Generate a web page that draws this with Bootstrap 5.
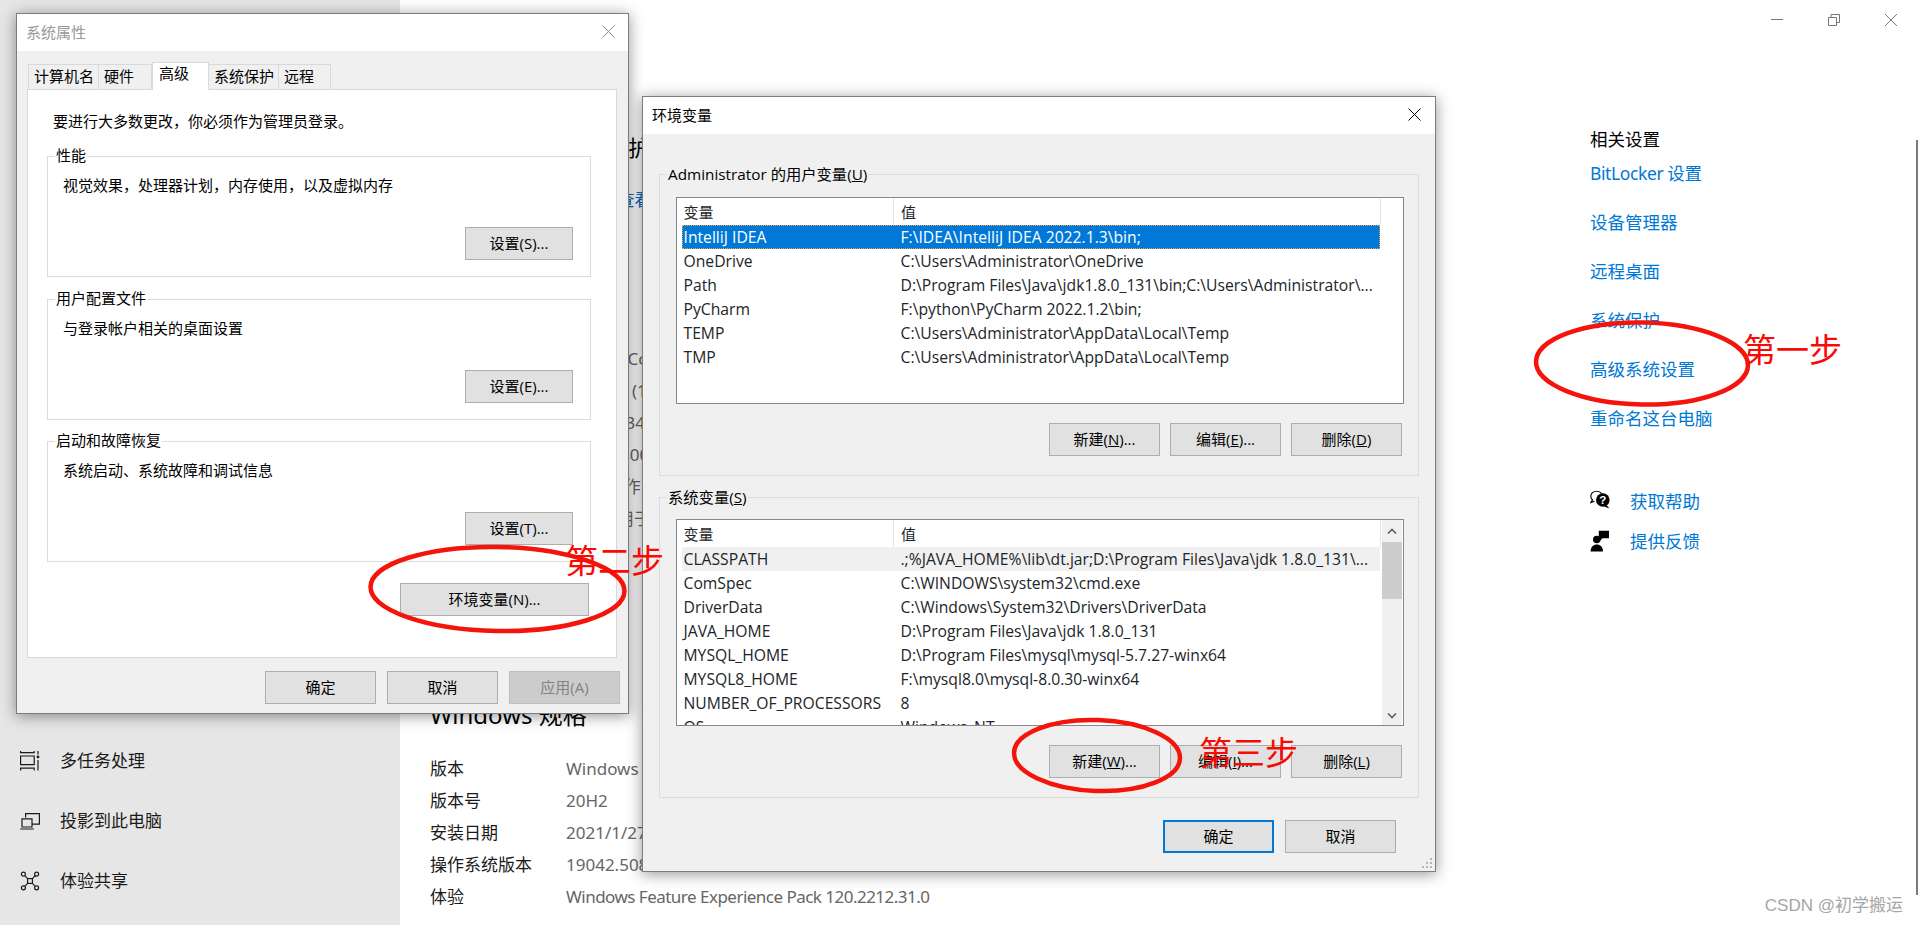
<!DOCTYPE html>
<html lang="zh-CN">
<head>
  <meta charset="UTF-8">
  <title>系统属性</title>
  <link href="https://cdn.jsdelivr.net/npm/bootstrap@5.3.0/dist/css/bootstrap.min.css" rel="stylesheet">
  <style>
    html, body { height: 925px; overflow: hidden; }
    body { background: #fff; color: #000; font-family: "Noto Sans", "Noto Sans CJK SC", sans-serif; font-size: 17px; }
    .page { height: 925px; position: relative; }

    /* settings page behind the dialogs */
    .side-pane { width: 400px; flex: none; background: #e6e6e6; padding-top: 731px; }
    .side-item { height: 60px; padding-left: 20px; gap: 20px; color: #1a1a1a; line-height: 24px; }
    .side-item svg { width: 20px; height: 20px; flex: none; }
    .main-pane { width: 1190px; flex: none; padding: 132px 0 0 30px; white-space: nowrap; overflow: hidden; }
    .main-head { font-size: 22px; line-height: 30px; }
    .main-link { color: #0067c0; line-height: 24px; margin-top: 26px; padding-left: 4px; }
    .spec-head { font-size: 24px; line-height: 32px; }
    .spec-head.first { margin-top: 52px; }
    .spec-head.second { margin-top: 164px; }
    .spec-row { height: 32px; line-height: 32px; }
    .spec-row.top-a { margin-top: 15px; }
    .spec-row.top-b { margin-top: 22px; }
    .spec-key { width: 136px; flex: none; color: #1a1a1a; }
    .spec-val { color: #666; }
    .spec-val.tight { letter-spacing: -.52px; }
    .rel-pane { width: 328px; flex: none; }
    .ctl-row { height: 12px; margin: 14px 21px 0 0; gap: 45px; }
    .ctl-row svg { width: 12px; height: 12px; }
    .rel-title { line-height: 24px; margin-top: 101px; font-size: 17.5px; }
    .rel-link { display: block; color: #0078d4; text-decoration: none; line-height: 24px; margin-top: 25px; font-size: 17.5px; }
    .rel-link.first { margin-top: 10px; letter-spacing: -.4px; }
    .help-row { height: 24px; gap: 20px; }
    .help-row.top-a { margin-top: 59px; }
    .help-row.top-b { margin-top: 16px; }
    .help-row svg { width: 20px; height: 22px; flex: none; }
    .help-row a { color: #0078d4; text-decoration: none; font-size: 17.5px; line-height: 24px; }
    .edge-bar { position: absolute; right: 0; top: 140px; width: 2px; height: 755px; background: #7a7a7a; }
    .mark-text { position: absolute; right: 15px; top: 895px; font-size: 17px; line-height: 22px; color: #a6a6a6; white-space: nowrap; font-family: "Liberation Sans", "Noto Sans CJK SC", sans-serif; }

    /* dialog windows */
    .win { position: absolute; background: #f0f0f0; border: 1px solid #7d7d7d; box-shadow: 0 2px 14px rgba(0,0,0,.42); font-size: 15px; line-height: 22px; font-family: "Open Sans", "Noto Sans CJK SC", sans-serif; }
    .win-sys { left: 16px; top: 13px; width: 613px; height: 701px; }
    .win-env { left: 642px; top: 96px; width: 794px; height: 776px; }
    .win-title { height: 37px; background: #fff; padding: 0 13px 2px 9px; }
    .win-sys .win-title { color: #999; padding-right: 12px; }
    .win-title svg { width: 15px; height: 15px; }
    .win-btn { --bs-btn-padding-x: 0; --bs-btn-padding-y: 0; --bs-btn-font-size: 15px; --bs-btn-line-height: 31px; --bs-btn-border-radius: 0; --bs-btn-bg: #e1e1e1; --bs-btn-border-color: #adadad; --bs-btn-color: #000; height: 33px; background: #e1e1e1; border: 1px solid #adadad; border-radius: 0; color: #000; flex: none; }
    .win-btn.off, .win-btn.off:disabled { background: #cccccc; border-color: #bfbfbf; color: #838383; opacity: 1; }
    .win-btn.dflt { border: 2px solid #0078d7; line-height: 29px; }

    /* tabs */
    .tab-strip { margin: 12px 0 0 11px; height: 26px; flex-wrap: nowrap; align-items: flex-end; border: 0; gap: 0; }
    .tab-strip .nav-link { height: 25px; padding: 0 0 0 5px; font-size: 15px; line-height: 22px; color: #000; background: #f0f0f0; border: 1px solid #d9d9d9; border-bottom: 0; border-left: 0; border-radius: 0; margin: 0; }
    .tab-strip .nav-link:first-child { border-left: 1px solid #d9d9d9; }
    .tab-strip .nav-link.active { height: 28px; background: #fff; line-height: 21px; border: 1px solid #d9d9d9; border-bottom: 0; position: relative; z-index: 1; margin-bottom: -1px; padding-left: 6px; }
    .tab-a { width: 71px; } .tab-b { width: 53px; } .tab-c { width: 57px; } .tab-d { width: 70px; } .tab-e { width: 52px; }
    .tab-panel { margin-left: 10px; width: 590px; height: 569px; background: #fff; border: 1px solid #d9d9d9; padding: 20px 25px 0 19px; }
    .tab-note { padding-left: 6px; margin-bottom: 24px; }
    .grp { position: relative; border: 1px solid #dcdcdc; padding: 17px 17px 16px 15px; }
    .grp-sys { height: 121px; margin-bottom: 21.5px; }
    .grp-cap { position: absolute; left: 7px; top: -13px; padding: 0 1px; background: #fff; white-space: nowrap; }
    .set-btn { width: 108px; margin-top: auto; align-self: flex-end; }
    .env-open { width: 189px; margin: -1px 2px 0 auto; }
    .sys-foot { margin: 13px 0 0 248px; gap: 11px; }
    .foot-btn { width: 111px; }

    /* environment variable lists */
    .env-body { padding: 40px 16px 0 16px; }
    .grp-env { height: 302px; margin-bottom: 21px; padding: 22px 16px 0 15.5px; background: #f0f0f0; }
    .grp-env + .grp-env { height: 301px; margin-bottom: 22px; padding-top: 21px; }
    .grp-env .grp-cap { background: #f0f0f0; left: 7px; top: -12px; font-size: 15.3px; }
    .var-box { height: 207px; width: 728px; background: #fff; border: 1px solid #828790; padding-left: 5px; overflow: hidden; }
    .var-table { width: 699px; flex: none; table-layout: fixed; border-collapse: collapse; margin: 0; --bs-table-bg: transparent; font-size: 15.7px; white-space: nowrap; }
    .var-table > :not(caption) > * > * { padding: 0 0 0 2px; height: 24px; line-height: 24px; border: 0; box-shadow: none; background: transparent; color: inherit; overflow: hidden; }
    .var-table th { font-weight: 400; font-size: 15px; height: 27px !important; line-height: 26px !important; border-right: 1px solid #e5e5e5 !important; }
    .var-table th:first-child { width: 212px; }
    .var-table td:nth-child(2), .var-table th:nth-child(2) { padding-left: 7px; }
    .var-table tr.sel-row { color: #fff; background: #0078d7; outline: 1px dotted #e8a33d; outline-offset: -1px; }
    .var-table tr.hot-row { background: #f0f0f0; }
    .scroll-col { width: 20px; flex: none; background: #f0f0f0; margin-left: 1px; position: relative; }
    .scroll-arrow { height: 22px; }
    .scroll-arrow svg { width: 10px; height: 6px; }
    .scroll-thumb { height: 57px; background: #cdcdcd; }
    .scroll-fill { height: 106px; }
    .var-btns { gap: 10px; margin-top: 19px; }
    .env-foot { margin: 0 23px 0 0; gap: 11px; }
    .grip { position: absolute; right: 2px; bottom: 2px; width: 11px; height: 11px; }

    /* red hand annotations */
    .ink { position: absolute; left: 0; top: 0; width: 1918px; height: 925px; pointer-events: none; }
    .ink-text { position: absolute; color: #f80a05; font-size: 33px; line-height: 40px; white-space: nowrap; font-family: "Noto Sans CJK SC", sans-serif; font-weight: 400; }
    .ink-a { left: 1743px; top: 328px; }
    .ink-b { left: 565px; top: 539px; }
    .ink-c { left: 1199px; top: 731px; }
  </style>
</head>
<body>
  <div class="page d-flex">
    <div class="side-pane">
      <div class="side-item d-flex align-items-center">
        <svg viewBox="0 0 20 20" fill="none" stroke="#1a1a1a" stroke-width="1.2"><path d="M.6 0v1.6h13.6V0M.6 5h13.6v8.6H.6zM.6 19.5v-2.4h13.6v2.4M18 0v3.5M18 9v10.5"/><circle cx="18" cy="6" r="1.4" fill="#1a1a1a" stroke="none"/></svg>
        <span>多任务处理</span>
      </div>
      <div class="side-item d-flex align-items-center">
        <svg viewBox="0 0 20 20" fill="none" stroke="#1a1a1a" stroke-width="1.2"><path d="M5.6 6.5V2.6h13.8v10.6h-7.6M2 7.8h10v8.2H2zM.2 18h13.6"/></svg>
        <span>投影到此电脑</span>
      </div>
      <div class="side-item d-flex align-items-center">
        <svg viewBox="0 0 20 20" fill="none" stroke="#1a1a1a" stroke-width="1.2"><rect x="7.6" y="7.6" width="4.8" height="4.8"/><circle cx="3.4" cy="3.2" r="2"/><circle cx="16.6" cy="3.2" r="2"/><circle cx="3.4" cy="16.8" r="2"/><circle cx="16.6" cy="16.8" r="2"/><path d="M5 4.8l2.6 2.8M15 4.8l-2.6 2.8M5 15.2l2.6-2.8M15 15.2l-2.6-2.8"/></svg>
        <span>体验共享</span>
      </div>
    </div>

    <div class="main-pane">
      <div class="main-head">你的电脑受监控和保护</div>
      <div class="main-link">在 Windows 安全中心中查看详细信息</div>
      <div class="spec-head first">设备规格</div>
      <div class="d-flex spec-row top-a"><div class="spec-key">设备名称</div><div class="spec-val">PC-1</div></div>
      <div class="d-flex spec-row"><div class="spec-key">处理器</div><div class="spec-val">Intel(R) Core(TM) i7-7700HQ CPU</div></div>
      <div class="d-flex spec-row"><div class="spec-key">机带 RAM</div><div class="spec-val">16.0 GB (15.9 GB 可用)</div></div>
      <div class="d-flex spec-row"><div class="spec-key">设备 ID</div><div class="spec-val">A2F5C834-7B10</div></div>
      <div class="d-flex spec-row"><div class="spec-key">产品 ID</div><div class="spec-val">00330-80000</div></div>
      <div class="d-flex spec-row"><div class="spec-key">系统类型</div><div class="spec-val">64 位操作系统</div></div>
      <div class="d-flex spec-row"><div class="spec-key">笔和触控</div><div class="spec-val">没有可用于此显示器的笔或触控输入</div></div>
      <div class="spec-head second">Windows 规格</div>
      <div class="d-flex spec-row top-b"><div class="spec-key">版本</div><div class="spec-val">Windows 10 专业版</div></div>
      <div class="d-flex spec-row"><div class="spec-key">版本号</div><div class="spec-val">20H2</div></div>
      <div class="d-flex spec-row"><div class="spec-key">安装日期</div><div class="spec-val">2021/1/27</div></div>
      <div class="d-flex spec-row"><div class="spec-key">操作系统版本</div><div class="spec-val">19042.508</div></div>
      <div class="d-flex spec-row"><div class="spec-key">体验</div><div class="spec-val tight">Windows Feature Experience Pack 120.2212.31.0</div></div>
    </div>

    <div class="rel-pane">
      <div class="ctl-row d-flex justify-content-end">
        <svg viewBox="0 0 12 12" fill="none" stroke="#777"><path d="M0 5.5h12"/></svg>
        <svg viewBox="0 0 12 12" fill="none" stroke="#777"><path d="M.5 3.5h8v8h-8zM3 3.5V.5h8.5v8H8.5"/></svg>
        <svg viewBox="0 0 12 12" fill="none" stroke="#777"><path d="M0 0l12 12M12 0L0 12"/></svg>
      </div>
      <div class="rel-title">相关设置</div>
      <a class="rel-link first" href="#">BitLocker 设置</a>
      <a class="rel-link" href="#">设备管理器</a>
      <a class="rel-link" href="#">远程桌面</a>
      <a class="rel-link" href="#">系统保护</a>
      <a class="rel-link" href="#">高级系统设置</a>
      <a class="rel-link" href="#">重命名这台电脑</a>
      <div class="help-row top-a d-flex align-items-center">
        <svg viewBox="0 0 20 22" fill="#000"><path d="M6.6 1.2C3.2 1.2.8 3.4.8 6.2c0 1.5.7 2.8 1.8 3.7L.8 12.6l3.6-1.4" fill="none" stroke="#000" stroke-width="1.1"/><path d="M6.6 1.2c2.2 0 4 .9 5 2.4" fill="none" stroke="#000" stroke-width="1.1"/><circle cx="12.8" cy="10" r="6.8"/><path d="M16.5 15l3 3.4-5.4-1.8z"/><text x="12.8" y="14.2" text-anchor="middle" font-size="11.5" font-weight="700" fill="#fff" font-family="Liberation Sans, sans-serif">?</text></svg>
        <a href="#">获取帮助</a>
      </div>
      <div class="help-row top-b d-flex align-items-center">
        <svg viewBox="0 0 20 22" fill="#000"><circle cx="6.8" cy="9.5" r="3.8"/><path d="M.6 21.5c0-4.600 2.800-7 6.200-7s6.200 2.400 6.200 7z"/><path d="M8.800 .8H19v7.400h-6.400L9.800 10.800V8.200H8.800z"/></svg>
        <a href="#">提供反馈</a>
      </div>
    </div>

    <div class="edge-bar"></div>
    <div class="mark-text">CSDN @初学搬运</div>

    <!-- 系统属性 -->
    <div class="win win-sys">
      <div class="win-title d-flex align-items-center justify-content-between">
        <span>系统属性</span>
        <svg viewBox="0 0 15 15" fill="none" stroke="#888"><path d="M1.500 1.500l12 12M13.500 1.500l-12 12"/></svg>
      </div>
      <div class="nav nav-tabs tab-strip">
        <a class="nav-link tab-a" href="#">计算机名</a>
        <a class="nav-link tab-b" href="#">硬件</a>
        <a class="nav-link active tab-c" href="#">高级</a>
        <a class="nav-link tab-d" href="#">系统保护</a>
        <a class="nav-link tab-e" href="#">远程</a>
      </div>
      <div class="tab-panel">
        <div class="tab-note">要进行大多数更改，你必须作为管理员登录。</div>
        <div class="grp grp-sys d-flex flex-column">
          <span class="grp-cap">性能</span>
          <div>视觉效果，处理器计划，内存使用，以及虚拟内存</div>
          <button type="button" class="btn win-btn set-btn">设置(S)...</button>
        </div>
        <div class="grp grp-sys d-flex flex-column">
          <span class="grp-cap">用户配置文件</span>
          <div>与登录帐户相关的桌面设置</div>
          <button type="button" class="btn win-btn set-btn">设置(E)...</button>
        </div>
        <div class="grp grp-sys d-flex flex-column">
          <span class="grp-cap">启动和故障恢复</span>
          <div>系统启动、系统故障和调试信息</div>
          <button type="button" class="btn win-btn set-btn">设置(T)...</button>
        </div>
        <div class="d-flex"><button type="button" class="btn win-btn env-open">环境变量(N)...</button></div>
      </div>
      <div class="d-flex sys-foot">
        <button type="button" class="btn win-btn foot-btn">确定</button>
        <button type="button" class="btn win-btn foot-btn">取消</button>
        <button type="button" class="btn win-btn foot-btn off" disabled>应用(A)</button>
      </div>
    </div>

    <!-- 环境变量 -->
    <div class="win win-env">
      <div class="win-title d-flex align-items-center justify-content-between">
        <span>环境变量</span>
        <svg viewBox="0 0 15 15" fill="none" stroke="#000"><path d="M1.500 1.500l12 12M13.500 1.500l-12 12"/></svg>
      </div>
      <div class="env-body">
        <div class="grp grp-env">
          <span class="grp-cap">Administrator 的用户变量(<u>U</u>)</span>
          <div class="var-box">
            <table class="table var-table">
              <thead><tr><th>变量</th><th>值</th></tr></thead>
              <tbody>
                <tr class="sel-row"><td>IntelliJ IDEA</td><td>F:\IDEA\IntelliJ IDEA 2022.1.3\bin;</td></tr>
                <tr><td>OneDrive</td><td>C:\Users\Administrator\OneDrive</td></tr>
                <tr><td>Path</td><td>D:\Program Files\Java\jdk1.8.0_131\bin;C:\Users\Administrator\...</td></tr>
                <tr><td>PyCharm</td><td>F:\python\PyCharm 2022.1.2\bin;</td></tr>
                <tr><td>TEMP</td><td>C:\Users\Administrator\AppData\Local\Temp</td></tr>
                <tr><td>TMP</td><td>C:\Users\Administrator\AppData\Local\Temp</td></tr>
              </tbody>
            </table>
          </div>
          <div class="d-flex justify-content-end var-btns">
            <button type="button" class="btn win-btn foot-btn">新建(<u>N</u>)...</button>
            <button type="button" class="btn win-btn foot-btn">编辑(<u>E</u>)...</button>
            <button type="button" class="btn win-btn foot-btn">删除(<u>D</u>)</button>
          </div>
        </div>
        <div class="grp grp-env">
          <span class="grp-cap">系统变量(<u>S</u>)</span>
          <div class="var-box d-flex">
            <table class="table var-table">
              <thead><tr><th>变量</th><th>值</th></tr></thead>
              <tbody>
                <tr class="hot-row"><td>CLASSPATH</td><td>.;%JAVA_HOME%\lib\dt.jar;D:\Program Files\Java\jdk 1.8.0_131\...</td></tr>
                <tr><td>ComSpec</td><td>C:\WINDOWS\system32\cmd.exe</td></tr>
                <tr><td>DriverData</td><td>C:\Windows\System32\Drivers\DriverData</td></tr>
                <tr><td>JAVA_HOME</td><td>D:\Program Files\Java\jdk 1.8.0_131</td></tr>
                <tr><td>MYSQL_HOME</td><td>D:\Program Files\mysql\mysql-5.7.27-winx64</td></tr>
                <tr><td>MYSQL8_HOME</td><td>F:\mysql8.0\mysql-8.0.30-winx64</td></tr>
                <tr><td>NUMBER_OF_PROCESSORS</td><td>8</td></tr>
                <tr><td>OS</td><td>Windows_NT</td></tr>
              </tbody>
            </table>
            <div class="scroll-col">
              <div class="scroll-arrow d-flex align-items-center justify-content-center"><svg viewBox="0 0 10 6" fill="none" stroke="#606060" stroke-width="1.600"><path d="M1 5.500l4-4 4 4"/></svg></div>
              <div class="scroll-thumb"></div>
              <div class="scroll-fill"></div>
              <div class="scroll-arrow d-flex align-items-center justify-content-center"><svg viewBox="0 0 10 6" fill="none" stroke="#606060" stroke-width="1.600"><path d="M1 .5l4 4 4-4"/></svg></div>
            </div>
          </div>
          <div class="d-flex justify-content-end var-btns">
            <button type="button" class="btn win-btn foot-btn">新建(<u>W</u>)...</button>
            <button type="button" class="btn win-btn foot-btn">编辑(<u>I</u>)...</button>
            <button type="button" class="btn win-btn foot-btn">删除(<u>L</u>)</button>
          </div>
        </div>
        <div class="d-flex justify-content-end env-foot">
          <button type="button" class="btn win-btn foot-btn dflt">确定</button>
          <button type="button" class="btn win-btn foot-btn">取消</button>
        </div>
      </div>
      <svg class="grip" viewBox="0 0 11 11" fill="#b5b5b5"><rect x="8" y="0" width="2" height="2"/><rect x="4" y="4" width="2" height="2"/><rect x="8" y="4" width="2" height="2"/><rect x="0" y="8" width="2" height="2"/><rect x="4" y="8" width="2" height="2"/><rect x="8" y="8" width="2" height="2"/></svg>
    </div>

    <!-- 红色标注 -->
    <svg class="ink" viewBox="0 0 1918 925" fill="none" stroke="#f5140c" stroke-width="4.500">
      <ellipse cx="1642" cy="363.500" rx="106" ry="41" transform="rotate(1 1642 363.500)"/>
      <ellipse cx="497.500" cy="589" rx="127" ry="42" transform="rotate(1 497.500 589)"/>
      <ellipse cx="1097" cy="755.500" rx="83" ry="35.500" transform="rotate(2 1097 755.500)"/>
    </svg>
    <div class="ink-text ink-a">第一步</div>
    <div class="ink-text ink-b">第二步</div>
    <div class="ink-text ink-c">第三步</div>
  </div>

  <script src="https://cdn.jsdelivr.net/npm/bootstrap@5.3.0/dist/js/bootstrap.bundle.min.js"></script>
</body>
</html>
